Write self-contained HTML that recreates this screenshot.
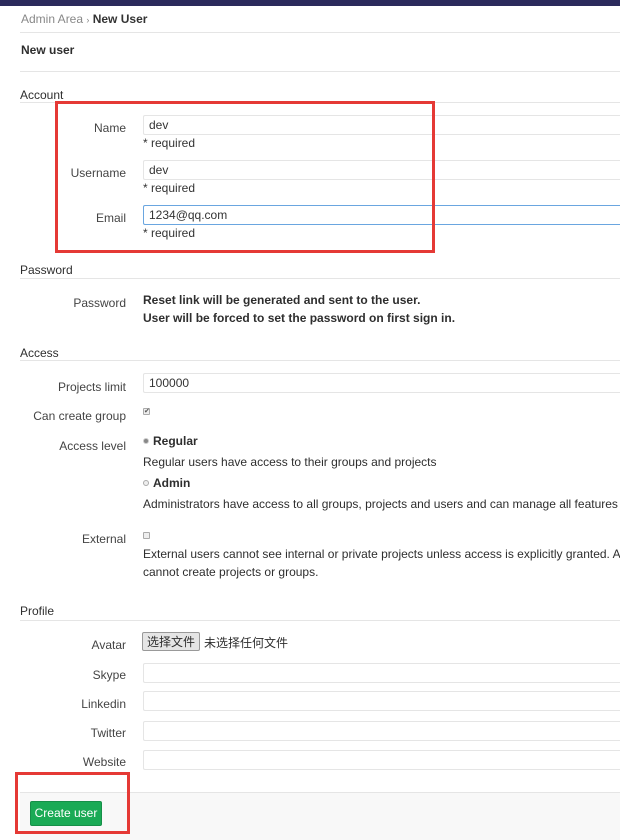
<!DOCTYPE html>
<html><head><meta charset="utf-8"><style>
*{box-sizing:border-box;margin:0;padding:0}
html,body{width:620px;height:840px;overflow:hidden}
body{background:#fff;font-family:"Segoe UI","Liberation Sans","Noto Sans CJK SC",sans-serif;font-size:12px;color:#2e2e2e;position:relative}
.a{position:absolute;white-space:nowrap}
.l{position:absolute;right:494px;text-align:right;color:#444;white-space:nowrap}
.in{position:absolute;left:143px;width:477px;height:20px;border:1px solid #e5e5e5;border-right:none;border-radius:2px 0 0 2px;padding:0 5px;line-height:18px;color:#333}
.hr{position:absolute;left:20px;width:600px;height:1px;background:#e5e5e5}
.h{position:absolute;left:20px;color:#2e2e2e}
.req{position:absolute;left:143px;color:#333}
.red{position:absolute;border:3px solid #e53935}
.cb{position:absolute;width:7px;height:7px;border:1px solid #aaa;background:#eee;border-radius:1px}
.clip{position:absolute;left:143px;width:477px;overflow:hidden;white-space:nowrap}
</style></head><body>
<div class="a" style="left:0;top:0;width:620px;height:6px;background:#2b2a5c"></div>
<div class="a" style="left:21px;top:12px;color:#888">Admin Area <span style="font-size:9px">›</span> <b style="color:#333;font-weight:600">New User</b></div>
<div class="hr" style="top:32px"></div>
<div class="a" style="left:21px;top:43px;font-weight:600">New user</div>
<div class="hr" style="top:71px"></div>
<div class="h" style="top:88px">Account</div><div class="hr" style="top:102px"></div>
<div class="l" style="top:121px">Name</div><div class="in" style="top:115px">dev</div><div class="req" style="top:136px">* required</div>
<div class="l" style="top:166px">Username</div><div class="in" style="top:160px">dev</div><div class="req" style="top:181px">* required</div>
<div class="l" style="top:211px">Email</div><div class="in" style="top:205px;border-color:#6aa6e0">1234@qq.com</div><div class="req" style="top:226px">* required</div>
<div class="red" style="left:55px;top:101px;width:380px;height:152px"></div>
<div class="h" style="top:263px">Password</div><div class="hr" style="top:278px"></div>
<div class="l" style="top:296px">Password</div>
<div class="a" style="left:143px;top:291px;font-weight:bold;line-height:18px">Reset link will be generated and sent to the user.<br>User will be forced to set the password on first sign in.</div>
<div class="h" style="top:346px">Access</div><div class="hr" style="top:360px"></div>
<div class="l" style="top:380px">Projects limit</div><div class="in" style="top:373px">100000</div>
<div class="l" style="top:409px">Can create group</div><div class="cb" style="left:143px;top:408px;font-size:7px;line-height:5px;color:#555">✔</div>
<div class="l" style="top:439px">Access level</div>
<div class="a" style="left:143px;top:434px"><span style="display:inline-block;width:6px;height:6px;border-radius:50%;background:#888;border:1px solid #ccc;margin-right:4px;vertical-align:1px"></span><b>Regular</b></div>
<div class="a" style="left:143px;top:455px">Regular users have access to their groups and projects</div>
<div class="a" style="left:143px;top:476px"><span style="display:inline-block;width:6px;height:6px;border-radius:50%;background:#eee;border:1px solid #aaa;margin-right:4px;vertical-align:1px"></span><b>Admin</b></div>
<div class="clip" style="top:497px">Administrators have access to all groups, projects and users and can manage all features in</div>
<div class="l" style="top:532px">External</div><div class="cb" style="left:143px;top:532px"></div>
<div class="clip" style="top:545px;line-height:18px">External users cannot see internal or private projects unless access is explicitly granted. Also<br>cannot create projects or groups.</div>
<div class="h" style="top:604px">Profile</div><div class="hr" style="top:620px"></div>
<div class="l" style="top:638px">Avatar</div>
<div class="a" style="left:142px;top:632px;height:19px;width:58px;border:1px solid #999;background:#e5e5e5;border-radius:2px;text-align:center;line-height:17px;font-family:'Noto Sans CJK SC',sans-serif">选择文件</div>
<div class="a" style="left:204px;top:634px;font-family:'Noto Sans CJK SC',sans-serif">未选择任何文件</div>
<div class="l" style="top:668px">Skype</div><div class="in" style="top:663px"></div>
<div class="l" style="top:697px">Linkedin</div><div class="in" style="top:691px"></div>
<div class="l" style="top:726px">Twitter</div><div class="in" style="top:721px"></div>
<div class="l" style="top:755px">Website</div><div class="in" style="top:750px"></div>
<div class="a" style="left:20px;top:792px;width:600px;height:48px;background:#f8f8f8;border-top:1px solid #e5e5e5"></div>
<div class="a" style="left:30px;top:801px;width:72px;height:25px;background:#1aaa55;border:1px solid #168f48;border-radius:2px;color:#fff;text-align:center;line-height:23px">Create user</div>
<div class="red" style="left:15px;top:772px;width:115px;height:62px"></div>
</body></html>
